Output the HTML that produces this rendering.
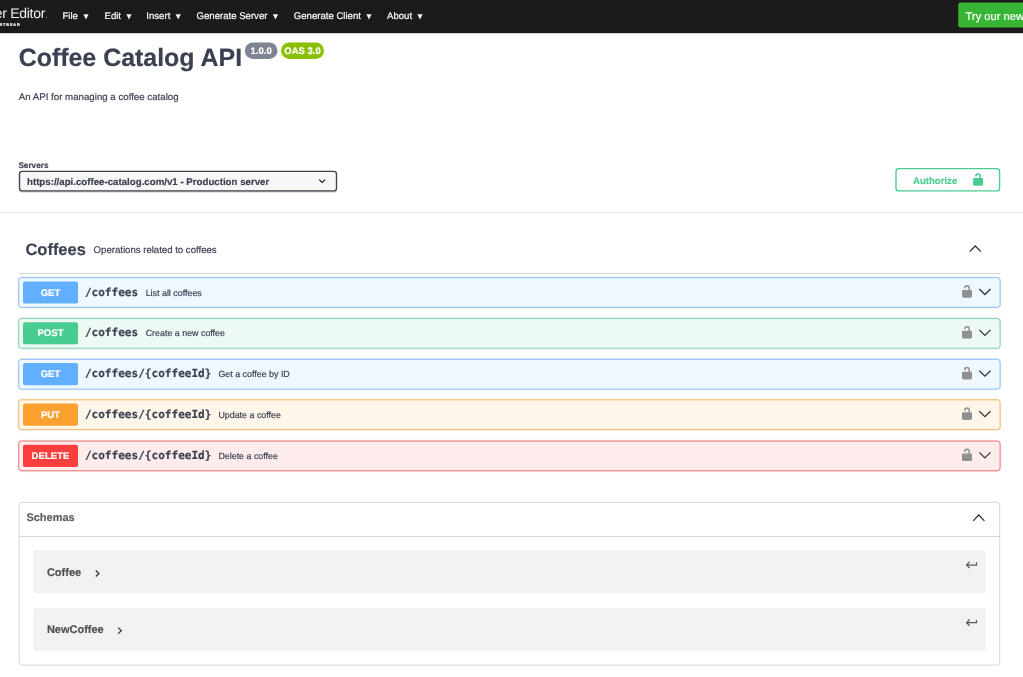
<!DOCTYPE html>
<html lang="en">
<head>
<meta charset="utf-8">
<title>Swagger Editor</title>
<style>
*{box-sizing:border-box;margin:0;padding:0}
html,body{width:1023px;height:677px;overflow:hidden;background:#fff}
body{font-family:'Liberation Sans',sans-serif;color:#3b4151;position:relative;text-rendering:geometricPrecision}
#bg{position:absolute;left:0;top:0}
#tx{position:absolute;left:0;top:0;width:1023px;height:677px;will-change:transform}
.t{position:absolute;white-space:nowrap;-webkit-text-stroke:.18px}
.t i{font-style:normal;font-size:8px;margin-left:4px;position:relative;top:0px}
</style>
</head>
<body>
<svg id="bg" width="1023" height="677" viewBox="0 0 1023 677">
<defs>
<linearGradient id="gsh" x1="0" y1="0" x2="0" y2="1"><stop offset="0" stop-color="#000" stop-opacity=".05"/><stop offset=".45" stop-color="#000" stop-opacity=".1"/><stop offset="1" stop-color="#000" stop-opacity="0"/></linearGradient>
<filter id="b1" x="-5%" y="-50%" width="110%" height="200%"><feGaussianBlur stdDeviation=".7"/></filter>
<filter id="b2" x="-5%" y="-50%" width="110%" height="200%"><feGaussianBlur stdDeviation=".9"/></filter>
</defs>
<rect x="0" y="0" width="1023" height="33.2" fill="#1b1b1b"/>
<rect x="958.25" y="2.6" width="80" height="24.8" rx="2.5" fill="#39b536"/>
<rect x="244.8" y="42.4" width="32.7" height="16.6" rx="8.3" fill="#7d8492"/>
<rect x="281" y="42.4" width="43" height="16.6" rx="8.3" fill="#89bf04"/>
<rect x="0" y="211.7" width="1023" height="2" fill="url(#gsh)"/>
<rect x="19.5" y="171.4" width="317" height="20.1" rx="2.8" fill="#000" opacity=".22" transform="translate(0,1.1)" filter="url(#b1)"/>
<rect x="19.5" y="171.4" width="317" height="19.5" rx="2.6" fill="#f7f7f7" stroke="#41444e" stroke-width="1.37"/>
<path d="M319.2 179.6 L322.1 182.4 L325 179.6" fill="none" stroke="#1a1a1a" stroke-width="1.25"/>
<rect x="896.0" y="168.6" width="103.6" height="22.3" rx="2.7" fill="#fff" stroke="#49cc90" stroke-width="1.37"/>
<g transform="translate(973.05,178.10)" fill="#49cc90" stroke="none"><path d="M0.9 0 H9.1 Q10 0 10 0.9 V6.1 Q10 7.7 8.4 7.7 H1.6 Q0 7.7 0 6.1 V0.9 Q0 0 0.9 0 Z"/><path d="M2.75 -1.5 V-1.9 A2.25 2.25 0 0 1 7.25 -1.9 V0.5" fill="none" stroke="#49cc90" stroke-width="1.5"/></g>
<path d="M969.7 251.6 L975.3 246.0 L980.9 251.6" fill="none" stroke="#303030" stroke-width="1.25"/>
<rect x="18.5" y="273.05" width="981.8" height="0.7" fill="#c4c6cb"/>
<rect x="18.75" y="277.65" width="981.3" height="29.7" rx="2.7" fill="#000" opacity=".24" filter="url(#b2)"/>
<rect x="18.75" y="277.65" width="981.3" height="29.7" rx="2.7" fill="#eff7ff" stroke="#61affe" stroke-width=".69"/>
<rect x="23" y="281.40" width="55" height="22.1" rx="2" fill="#61affe"/>
<g transform="translate(962.00,290.00)" fill="#909090" stroke="none"><path d="M0.9 0 H9.1 Q10 0 10 0.9 V6.1 Q10 7.7 8.4 7.7 H1.6 Q0 7.7 0 6.1 V0.9 Q0 0 0.9 0 Z"/><path d="M2.75 -1.5 V-1.9 A2.25 2.25 0 0 1 7.25 -1.9 V0.5" fill="none" stroke="#909090" stroke-width="1.5"/></g>
<path d="M979.3 289.00 L984.9 294.50 L990.5 289.00" fill="none" stroke="#303030" stroke-width="1.25"/>
<rect x="18.75" y="318.50" width="981.3" height="29.7" rx="2.7" fill="#000" opacity=".24" filter="url(#b2)"/>
<rect x="18.75" y="318.50" width="981.3" height="29.7" rx="2.7" fill="#edfaf4" stroke="#49cc90" stroke-width=".69"/>
<rect x="23" y="322.25" width="55" height="22.1" rx="2" fill="#49cc90"/>
<g transform="translate(962.00,330.85)" fill="#909090" stroke="none"><path d="M0.9 0 H9.1 Q10 0 10 0.9 V6.1 Q10 7.7 8.4 7.7 H1.6 Q0 7.7 0 6.1 V0.9 Q0 0 0.9 0 Z"/><path d="M2.75 -1.5 V-1.9 A2.25 2.25 0 0 1 7.25 -1.9 V0.5" fill="none" stroke="#909090" stroke-width="1.5"/></g>
<path d="M979.3 329.85 L984.9 335.35 L990.5 329.85" fill="none" stroke="#303030" stroke-width="1.25"/>
<rect x="18.75" y="359.35" width="981.3" height="29.7" rx="2.7" fill="#000" opacity=".24" filter="url(#b2)"/>
<rect x="18.75" y="359.35" width="981.3" height="29.7" rx="2.7" fill="#eff7ff" stroke="#61affe" stroke-width=".69"/>
<rect x="23" y="363.10" width="55" height="22.1" rx="2" fill="#61affe"/>
<g transform="translate(962.00,371.70)" fill="#909090" stroke="none"><path d="M0.9 0 H9.1 Q10 0 10 0.9 V6.1 Q10 7.7 8.4 7.7 H1.6 Q0 7.7 0 6.1 V0.9 Q0 0 0.9 0 Z"/><path d="M2.75 -1.5 V-1.9 A2.25 2.25 0 0 1 7.25 -1.9 V0.5" fill="none" stroke="#909090" stroke-width="1.5"/></g>
<path d="M979.3 370.70 L984.9 376.20 L990.5 370.70" fill="none" stroke="#303030" stroke-width="1.25"/>
<rect x="18.75" y="399.85" width="981.3" height="29.7" rx="2.7" fill="#000" opacity=".24" filter="url(#b2)"/>
<rect x="18.75" y="399.85" width="981.3" height="29.7" rx="2.7" fill="#fff6ea" stroke="#fca130" stroke-width=".69"/>
<rect x="23" y="403.60" width="55" height="22.1" rx="2" fill="#fca130"/>
<g transform="translate(962.00,412.20)" fill="#909090" stroke="none"><path d="M0.9 0 H9.1 Q10 0 10 0.9 V6.1 Q10 7.7 8.4 7.7 H1.6 Q0 7.7 0 6.1 V0.9 Q0 0 0.9 0 Z"/><path d="M2.75 -1.5 V-1.9 A2.25 2.25 0 0 1 7.25 -1.9 V0.5" fill="none" stroke="#909090" stroke-width="1.5"/></g>
<path d="M979.3 411.20 L984.9 416.70 L990.5 411.20" fill="none" stroke="#303030" stroke-width="1.25"/>
<rect x="18.75" y="441.05" width="981.3" height="29.7" rx="2.7" fill="#000" opacity=".24" filter="url(#b2)"/>
<rect x="18.75" y="441.05" width="981.3" height="29.7" rx="2.7" fill="#feecec" stroke="#f93e3e" stroke-width=".69"/>
<rect x="23" y="444.80" width="55" height="22.1" rx="2" fill="#f93e3e"/>
<g transform="translate(962.00,453.40)" fill="#909090" stroke="none"><path d="M0.9 0 H9.1 Q10 0 10 0.9 V6.1 Q10 7.7 8.4 7.7 H1.6 Q0 7.7 0 6.1 V0.9 Q0 0 0.9 0 Z"/><path d="M2.75 -1.5 V-1.9 A2.25 2.25 0 0 1 7.25 -1.9 V0.5" fill="none" stroke="#909090" stroke-width="1.5"/></g>
<path d="M979.3 452.40 L984.9 457.90 L990.5 452.40" fill="none" stroke="#303030" stroke-width="1.25"/>
<rect x="19.1" y="502.35" width="980.6" height="162.8" rx="2.7" fill="#fff" stroke="#c4c6cb" stroke-width=".69"/>
<rect x="19.1" y="536.2" width="980.6" height="0.7" fill="#c4c6cb"/>
<path d="M973.2 520.9 L978.8 515.0 L984.4 520.9" fill="none" stroke="#303030" stroke-width="1.25"/>
<rect x="33.2" y="550.30" width="952.3" height="43.3" rx="2.7" fill="#f2f2f2"/>
<path d="M95.6 570.50 L98.7 573.50 L95.6 576.50" fill="none" stroke="#333" stroke-width="1.3" transform="translate(0.2,-0.0)"/>
<path d="M976.5 562.30 V565.00 H967.2 M969.6 561.90 L966.6 565.00 L969.6 568.10" fill="none" stroke="#5a5a5a" stroke-width="1.25"/>
<rect x="33.2" y="607.95" width="952.3" height="43.3" rx="2.7" fill="#f2f2f2"/>
<path d="M118.0 628.15 L121.1 631.15 L118.0 634.15" fill="none" stroke="#333" stroke-width="1.3" transform="translate(0.2,-0.5)"/>
<path d="M976.5 619.95 V622.65 H967.2 M969.6 619.55 L966.6 622.65 L969.6 625.75" fill="none" stroke="#5a5a5a" stroke-width="1.25"/>
</svg>
<div id="tx">
<div class="t" style="left:-49.50px;width:200px;text-align:center;top:287.01px;font-size:9.6px;line-height:13.44px;color:#fff;font-weight:700;font-family:'Liberation Sans',sans-serif;">GET</div>
<div class="t" style="left:84.90px;top:285.01px;font-size:11.07px;line-height:15.5px;color:#3b4151;font-weight:700;font-family:'DejaVu Sans Mono','Liberation Mono',monospace;">/coffees</div>
<div class="t" style="left:145.70px;top:287.01px;font-size:8.9px;line-height:12.46px;color:#3b4151;font-weight:400;font-family:'Liberation Sans',sans-serif;">List all coffees</div>
<div class="t" style="left:-49.50px;width:200px;text-align:center;top:327.01px;font-size:9.6px;line-height:13.44px;color:#fff;font-weight:700;font-family:'Liberation Sans',sans-serif;">POST</div>
<div class="t" style="left:84.90px;top:325.00px;font-size:11.07px;line-height:15.5px;color:#3b4151;font-weight:700;font-family:'DejaVu Sans Mono','Liberation Mono',monospace;">/coffees</div>
<div class="t" style="left:145.70px;top:327.00px;font-size:8.9px;line-height:12.46px;color:#3b4151;font-weight:400;font-family:'Liberation Sans',sans-serif;">Create a new coffee</div>
<div class="t" style="left:-49.50px;width:200px;text-align:center;top:368.01px;font-size:9.6px;line-height:13.44px;color:#fff;font-weight:700;font-family:'Liberation Sans',sans-serif;">GET</div>
<div class="t" style="left:84.90px;top:366.01px;font-size:11.07px;line-height:15.5px;color:#3b4151;font-weight:700;font-family:'DejaVu Sans Mono','Liberation Mono',monospace;">/coffees/{coffeeId}</div>
<div class="t" style="left:218.40px;top:368.00px;font-size:8.9px;line-height:12.46px;color:#3b4151;font-weight:400;font-family:'Liberation Sans',sans-serif;">Get a coffee by ID</div>
<div class="t" style="left:-49.50px;width:200px;text-align:center;top:409.01px;font-size:9.6px;line-height:13.44px;color:#fff;font-weight:700;font-family:'Liberation Sans',sans-serif;">PUT</div>
<div class="t" style="left:84.90px;top:407.01px;font-size:11.07px;line-height:15.5px;color:#3b4151;font-weight:700;font-family:'DejaVu Sans Mono','Liberation Mono',monospace;">/coffees/{coffeeId}</div>
<div class="t" style="left:218.40px;top:409.01px;font-size:8.9px;line-height:12.46px;color:#3b4151;font-weight:400;font-family:'Liberation Sans',sans-serif;">Update a coffee</div>
<div class="t" style="left:-49.50px;width:200px;text-align:center;top:450.02px;font-size:9.6px;line-height:13.44px;color:#fff;font-weight:700;font-family:'Liberation Sans',sans-serif;">DELETE</div>
<div class="t" style="left:84.90px;top:448.01px;font-size:11.07px;line-height:15.5px;color:#3b4151;font-weight:700;font-family:'DejaVu Sans Mono','Liberation Mono',monospace;">/coffees/{coffeeId}</div>
<div class="t" style="left:218.40px;top:450.00px;font-size:8.9px;line-height:12.46px;color:#3b4151;font-weight:400;font-family:'Liberation Sans',sans-serif;">Delete a coffee</div>
<div class="t" style="left:46.90px;top:566.01px;font-size:11px;line-height:15.4px;color:#505050;font-weight:700;font-family:'Liberation Sans',sans-serif;">Coffee</div>
<div class="t" style="left:46.90px;top:623.01px;font-size:11px;line-height:15.4px;color:#505050;font-weight:700;font-family:'Liberation Sans',sans-serif;">NewCoffee</div>
<div class="t" style="left:-5.20px;top:4.01px;font-size:14px;line-height:19.6px;color:#f0f0f0;font-weight:400;font-family:'Liberation Sans',sans-serif;letter-spacing:-.3px;-webkit-text-stroke:0;">er Editor<span style="font-size:7px;margin-left:.5px">.</span></div>
<div class="t" style="left:-0.50px;top:22.01px;font-size:3.9px;line-height:5.46px;color:#fff;font-weight:700;font-family:'Liberation Sans',sans-serif;letter-spacing:.8px;">RTBEAR</div>
<div class="t" style="left:62.50px;top:10.00px;font-size:9.6px;line-height:13.44px;color:#fff;font-weight:400;font-family:'Liberation Sans',sans-serif;">File<i>▼</i></div>
<div class="t" style="left:104.50px;top:10.00px;font-size:9.6px;line-height:13.44px;color:#fff;font-weight:400;font-family:'Liberation Sans',sans-serif;">Edit<i>▼</i></div>
<div class="t" style="left:146.30px;top:10.00px;font-size:9.6px;line-height:13.44px;color:#fff;font-weight:400;font-family:'Liberation Sans',sans-serif;">Insert<i>▼</i></div>
<div class="t" style="left:196.50px;top:10.00px;font-size:9.6px;line-height:13.44px;color:#fff;font-weight:400;font-family:'Liberation Sans',sans-serif;">Generate Server<i>▼</i></div>
<div class="t" style="left:293.75px;top:10.00px;font-size:9.6px;line-height:13.44px;color:#fff;font-weight:400;font-family:'Liberation Sans',sans-serif;">Generate Client<i>▼</i></div>
<div class="t" style="left:387.00px;top:10.00px;font-size:9.6px;line-height:13.44px;color:#fff;font-weight:400;font-family:'Liberation Sans',sans-serif;">About<i>▼</i></div>
<div class="t" style="left:965.60px;top:10.00px;font-size:11.15px;line-height:15.61px;color:#fff;font-weight:400;font-family:'Liberation Sans',sans-serif;">Try our new</div>
<div class="t" style="left:18.70px;top:41.01px;font-size:24.93px;line-height:34.9px;color:#3b4151;font-weight:700;font-family:'Liberation Sans',sans-serif;">Coffee Catalog API</div>
<div class="t" style="left:161.15px;width:200px;text-align:center;top:45.00px;font-size:9.5px;line-height:13.3px;color:#fff;font-weight:700;font-family:'Liberation Sans',sans-serif;">1.0.0</div>
<div class="t" style="left:202.50px;width:200px;text-align:center;top:45.00px;font-size:9.5px;line-height:13.3px;color:#fff;font-weight:700;font-family:'Liberation Sans',sans-serif;">OAS 3.0</div>
<div class="t" style="left:18.80px;top:91.01px;font-size:9.7px;line-height:13.58px;color:#3b4151;font-weight:400;font-family:'Liberation Sans',sans-serif;">An API for managing a coffee catalog</div>
<div class="t" style="left:18.40px;top:160.00px;font-size:8.2px;line-height:11.48px;color:#3b4151;font-weight:700;font-family:'Liberation Sans',sans-serif;">Servers</div>
<div class="t" style="left:27.00px;top:176.01px;font-size:9.7px;line-height:13.58px;color:#3b4151;font-weight:700;font-family:'Liberation Sans',sans-serif;">https://api.coffee-catalog.com/v1 - Production server</div>
<div class="t" style="left:913.00px;top:175.01px;font-size:9.6px;line-height:13.44px;color:#49cc90;font-weight:700;font-family:'Liberation Sans',sans-serif;">Authorize</div>
<div class="t" style="left:25.40px;top:239.01px;font-size:16.5px;line-height:23.1px;color:#3b4151;font-weight:700;font-family:'Liberation Sans',sans-serif;">Coffees</div>
<div class="t" style="left:93.60px;top:244.01px;font-size:9.6px;line-height:13.44px;color:#3b4151;font-weight:400;font-family:'Liberation Sans',sans-serif;">Operations related to coffees</div>
<div class="t" style="left:26.40px;top:511.01px;font-size:11px;line-height:15.4px;color:#606060;font-weight:700;font-family:'Liberation Sans',sans-serif;">Schemas</div>
</div>
</body>
</html>
